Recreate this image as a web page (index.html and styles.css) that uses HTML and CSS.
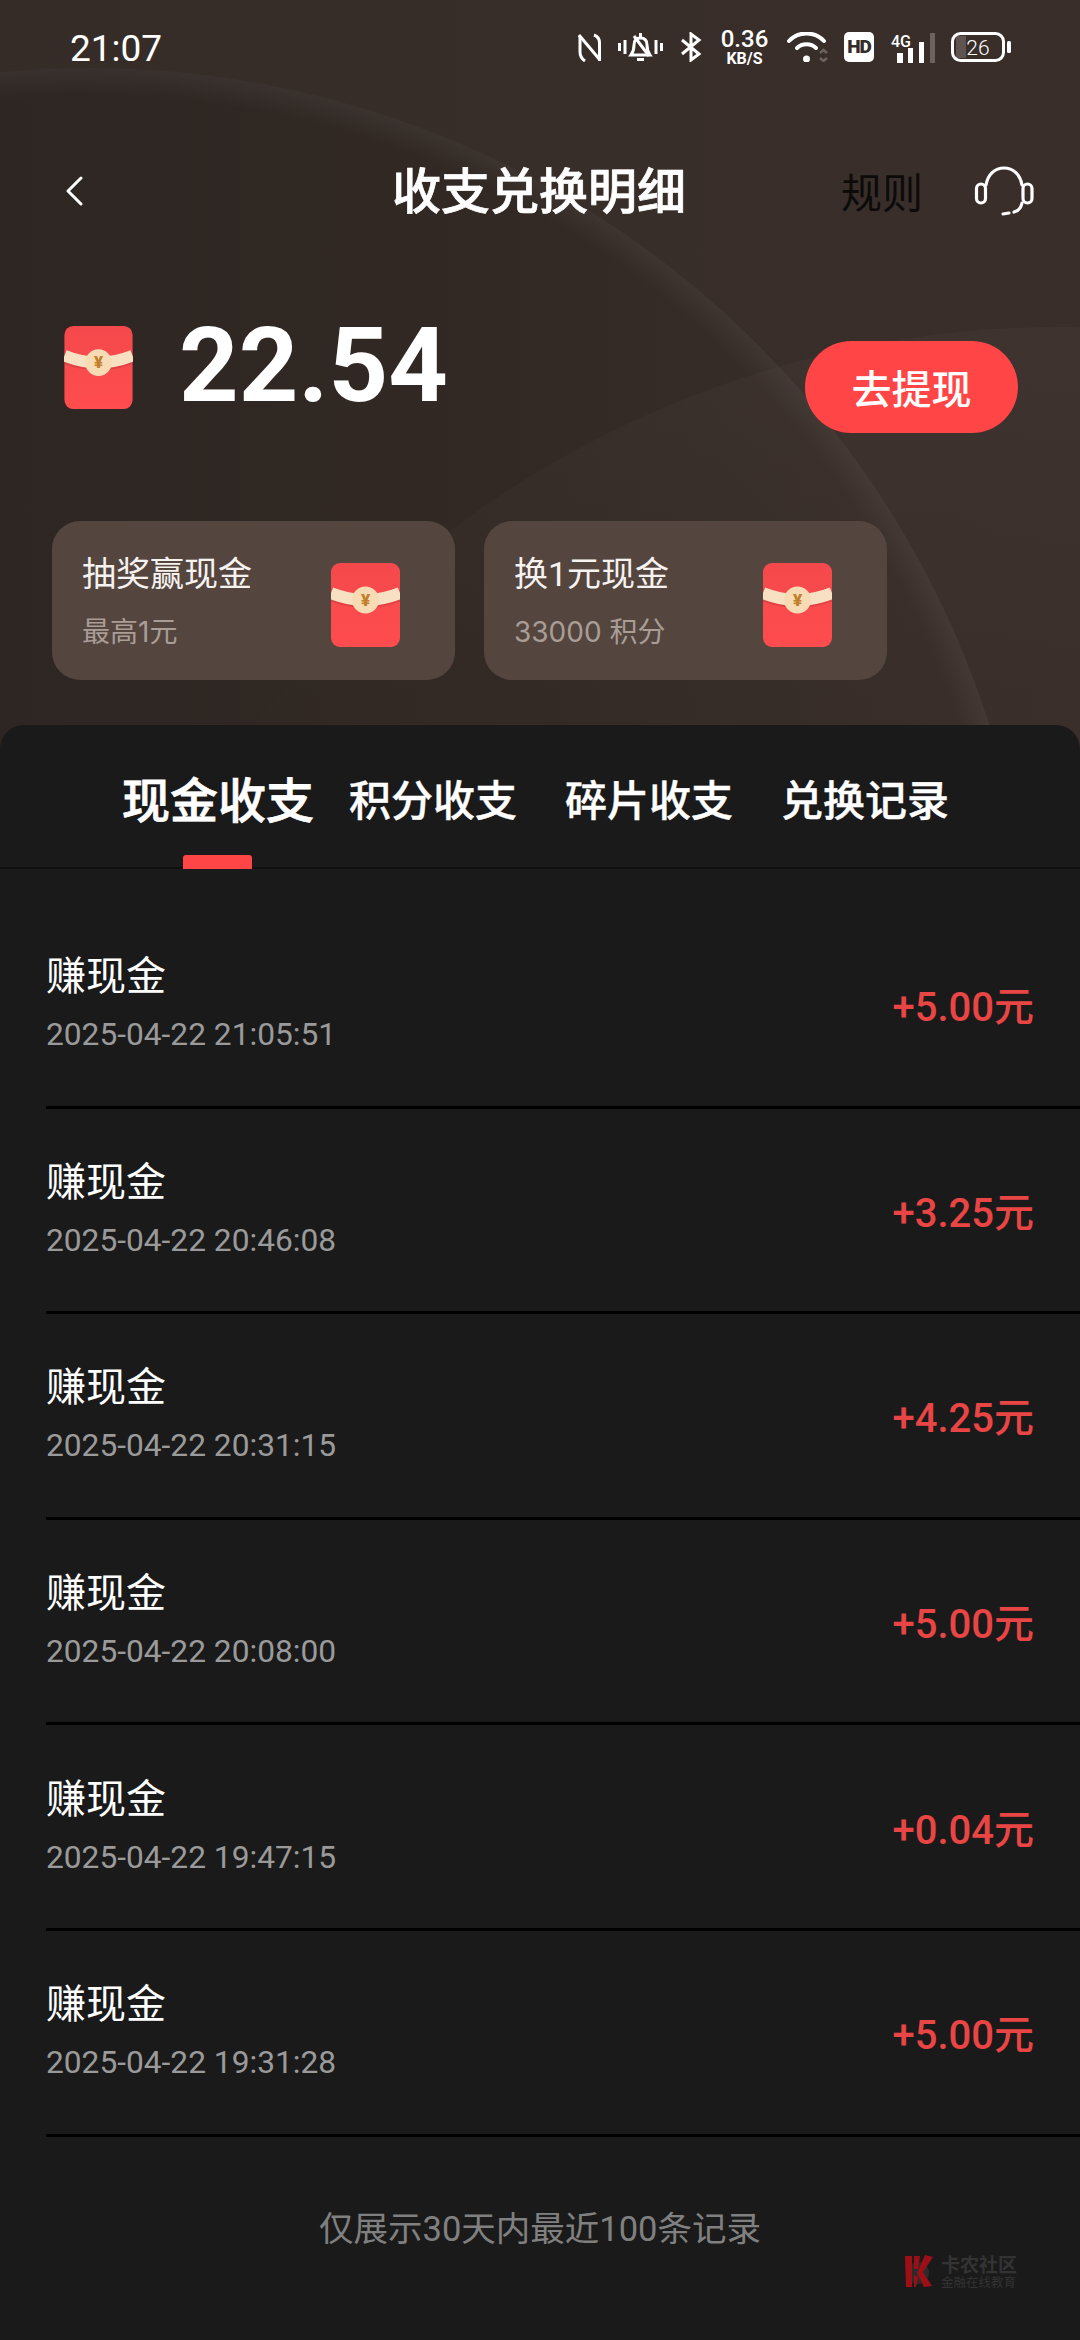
FILE: index.html
```html
<!DOCTYPE html>
<html lang="zh-CN">
<head>
  <meta charset="UTF-8" />
  <meta name="viewport" content="width=device-width, initial-scale=1.0"/>
  <title>收支兑换明细</title>
  <link rel="stylesheet" href="styles.css">
</head>
<body>

  <svg class="defs" width="0" height="0">
    <defs>
      <linearGradient id="packetFill" x1="0" y1="0" x2="0" y2="1">
        <stop offset="0" stop-color="#f4494c"/>
        <stop offset="1" stop-color="#ff4c4e"/>
      </linearGradient>
      <symbol id="packet" viewBox="0 0 69 84">
        <rect x="0" y="0" width="69" height="84" rx="9" fill="url(#packetFill)"/>
        <path d="M0 32 Q34.5 46 69 32" fill="none" stroke="#a92a2a" stroke-opacity=".3" stroke-width="12"/>
        <path d="M0 30 Q34.5 44 69 30" fill="none" stroke="#f8e0c2" stroke-width="12"/>
        <circle cx="34.5" cy="37" r="13.5" fill="#f6dbb4"/>
        <text x="34.5" y="43" text-anchor="middle" font-family="Roboto" font-weight="900" font-size="17" fill="#c27f2a">¥</text>
      </symbol>
    </defs>
  </svg>

  <div class="page">
    <div class="hero">
      <svg class="hero-bg" width="1080" height="760" viewBox="0 0 1080 760">
        <defs>
          <linearGradient id="heroFill" x1="0" y1="0" x2="1" y2="0">
            <stop offset="0" stop-color="#352c28"/>
            <stop offset="1" stop-color="#392e2a"/>
          </linearGradient>
          <linearGradient id="bigFill" gradientUnits="userSpaceOnUse" x1="0" y1="0" x2="1000" y2="0">
            <stop offset="0" stop-color="#2e2622"/>
            <stop offset=".5" stop-color="#322925"/>
            <stop offset="1" stop-color="#392e2a"/>
          </linearGradient>
          <radialGradient id="bigEdge" gradientUnits="userSpaceOnUse" cx="90" cy="1012" r="944">
            <stop offset=".97" stop-color="#fff" stop-opacity="0"/>
            <stop offset="1" stop-color="#fff" stop-opacity=".05"/>
          </radialGradient>
          <linearGradient id="smallArc" x1="0" y1="0" x2="0" y2="1">
            <stop offset="0" stop-color="#5a4e47" stop-opacity=".16"/>
            <stop offset=".18" stop-color="#5a4e47" stop-opacity=".02"/>
          </linearGradient>
        </defs>
        <rect width="1080" height="760" fill="url(#heroFill)"/>
        <circle cx="90" cy="1012" r="944" fill="url(#bigFill)"/>
        <circle cx="90" cy="1012" r="944" fill="url(#bigEdge)"/>
        <circle cx="1060" cy="1341" r="1014" fill="url(#smallArc)"/>
      </svg>

      <div class="statusbar">
        <span class="time">21:07</span>
        <div class="status-icons">
          <svg width="24" height="30" viewBox="0 0 24 30" fill="none" stroke="#fff" stroke-width="3">
            <path d="M2 4 V20 C2 24 4 27 7 29"/>
            <path d="M1 3 L22 28"/>
            <path d="M21.5 29 V11 C21.5 7 19 4 16 3"/>
          </svg>
          <svg width="45" height="32" viewBox="0 0 45 32" fill="none" stroke="#fff" stroke-width="3">
            <path d="M1.5 12 V20 M7 9 V23 M38 9 V23 M43.5 12 V20"/>
            <path d="M13 24 C16 20 16 17 16 14 C16 9 19 7 22.5 7 C26 7 29 9 29 14 C29 18 30 21 32 24 Z"/>
            <path d="M22.5 2 V6 M19 28.5 H26 M16 5 L31 25"/>
          </svg>
          <svg width="25" height="30" viewBox="0 0 25 30" fill="none" stroke="#fff" stroke-width="3">
            <path d="M3 8 L20 22 L12 28 V2 L20 8 L3 22"/>
          </svg>
          <div class="speed"><span class="speed-num">0.36</span><span class="speed-unit">KB/S</span></div>
          <svg width="43" height="30" viewBox="0 0 43 30" fill="none" stroke="#fff" stroke-width="4" stroke-linecap="round">
            <path d="M4 9 C13 -1 30 -1 39 9"/>
            <path d="M12 16 C17 11 26 11 31 16"/>
            <circle cx="21.5" cy="27" r="3.5" fill="#fff" stroke="none"/>
            <path d="M35 21 L38.5 18 L42 21 M35 26 L38.5 29 L42 26" stroke="#6d635e" stroke-width="2.5" stroke-linecap="butt"/>
          </svg>
          <span class="hd">HD</span>
          <svg width="45" height="31" viewBox="0 0 45 31">
            <text x="1" y="15" font-family="Roboto" font-size="16" font-weight="500" fill="#fff">4G</text>
            <rect x="7" y="21" width="6" height="10" fill="#fff"/>
            <rect x="18" y="16" width="5" height="15" fill="#fff"/>
            <rect x="29" y="10" width="5" height="21" fill="#fff"/>
            <rect x="40" y="1" width="5" height="30" fill="#6d635e"/>
          </svg>
          <svg width="61" height="30" viewBox="0 0 61 30">
            <rect x="5" y="4" width="10" height="22" fill="#5f544f"/>
            <rect x="1.5" y="1.5" width="51" height="27" rx="8" fill="none" stroke="#fff" stroke-width="3"/>
            <rect x="56" y="9" width="4" height="12" rx="1.5" fill="#fff"/>
            <text x="27" y="23" text-anchor="middle" font-family="Roboto" font-size="21" font-weight="300" fill="#fff">26</text>
          </svg>
        </div>
      </div>

      <div class="nav">
        <svg class="back" width="20" height="30" viewBox="0 0 20 30" fill="none" stroke="#fff" stroke-width="3" stroke-linecap="round" stroke-linejoin="round">
          <path d="M17 2 L4 15 L17 28"/>
        </svg>
        <h1 class="nav-title">收支兑换明细</h1>
        <div class="nav-right">
          <span class="rule">规则</span>
          <svg width="66" height="56" viewBox="30 20 66 56" fill="none" stroke="#fff" stroke-width="3.2" stroke-linecap="round">
            <path d="M45 42 C47 31 54 25 63 25 C72 25 79 31 81 42"/>
            <rect x="35.5" y="41" width="9" height="19" rx="4.5"/>
            <rect x="82" y="41" width="9" height="19" rx="4.5"/>
            <path d="M81 60 C80 65 77 68 73 69"/>
            <path d="M62 71 L68 70"/>
          </svg>
        </div>
      </div>

      <div class="balance">
        <svg class="packet-big" width="69" height="83"><use href="#packet"/></svg>
        <span class="amount">22.54</span>
        <button class="withdraw">去提现</button>
      </div>

      <div class="cards">
        <div class="card">
          <div class="card-text">
            <div class="card-title">抽奖赢现金</div>
            <div class="card-sub">最高1元</div>
          </div>
          <svg class="card-packet" width="69" height="84"><use href="#packet"/></svg>
        </div>
        <div class="card">
          <div class="card-text">
            <div class="card-title">换1元现金</div>
            <div class="card-sub">33000 积分</div>
          </div>
          <svg class="card-packet" width="69" height="84"><use href="#packet"/></svg>
        </div>
      </div>
    </div>

    <div class="sheet">
      <div class="tabs">
        <div class="tab tab-active">现金收支</div>
        <div class="tab">积分收支</div>
        <div class="tab">碎片收支</div>
        <div class="tab">兑换记录</div>
      </div>

      <div class="list">
        <div class="row">
          <div class="row-text"><div class="row-title">赚现金</div><div class="row-date">2025-04-22 21:05:51</div></div>
          <div class="row-money">+5.00元</div>
        </div>
        <div class="row">
          <div class="row-text"><div class="row-title">赚现金</div><div class="row-date">2025-04-22 20:46:08</div></div>
          <div class="row-money">+3.25元</div>
        </div>
        <div class="row">
          <div class="row-text"><div class="row-title">赚现金</div><div class="row-date">2025-04-22 20:31:15</div></div>
          <div class="row-money">+4.25元</div>
        </div>
        <div class="row">
          <div class="row-text"><div class="row-title">赚现金</div><div class="row-date">2025-04-22 20:08:00</div></div>
          <div class="row-money">+5.00元</div>
        </div>
        <div class="row">
          <div class="row-text"><div class="row-title">赚现金</div><div class="row-date">2025-04-22 19:47:15</div></div>
          <div class="row-money">+0.04元</div>
        </div>
        <div class="row">
          <div class="row-text"><div class="row-title">赚现金</div><div class="row-date">2025-04-22 19:31:28</div></div>
          <div class="row-money">+5.00元</div>
        </div>
      </div>

      <div class="footnote">仅展示30天内最近100条记录</div>

      <div class="watermark">
        <svg width="30" height="33" viewBox="0 0 30 33">
          <circle cx="13" cy="18" r="11" fill="#2b2b2b"/>
          <path d="M0 1 H7 V32 H1 Z M9 1 H15 L13 14 H9 Z M9 20 L13 22 L11 32 H9 Z" fill="#9d0f17"/>
          <path d="M20 0 L28 2 L18 17 L27 31 L19 32 L12 18 Z" fill="#9d0f17"/>
        </svg>
        <div class="watermark-text">
          <span class="wm-name">卡农社区</span>
          <span class="wm-sub">金融在线教育</span>
        </div>
      </div>
    </div>
  </div>

</body>
</html>
```

FILE: styles.css
```css
* {
  box-sizing: border-box;
}
html, body {
  margin: 0;
  padding: 0;
  background: #1a1a1a;
}
body {
  font-family: Roboto, "Noto Sans CJK SC", sans-serif;
  color: #fff;
}
.defs {
  position: absolute;
}
.page {
  width: 1080px;
  height: 2340px;
  overflow: hidden;
  display: flex;
  flex-direction: column;
}

/* hero */
.hero {
  position: relative;
  height: 725px;
  flex: none;
}
.hero-bg {
  position: absolute;
  top: 0;
  left: 0;
}
.statusbar, .nav, .balance, .cards {
  position: relative;
}
.statusbar {
  height: 94px;
  padding: 0 68px 0 70px;
  display: flex;
  align-items: center;
  justify-content: space-between;
}
.time {
  margin-top: 2px;
  font-size: 37px;
}
.status-icons {
  display: flex;
  align-items: center;
  gap: 16px;
}
.speed {
  display: flex;
  flex-direction: column;
  align-items: center;
  width: 49px;
  line-height: 1;
  font-weight: 500;
}
.speed-num {
  font-size: 24px;
  line-height: 23px;
}
.speed-unit {
  font-size: 16px;
  line-height: 15px;
  font-weight: 700;
}
.hd {
  width: 30px;
  height: 30px;
  border-radius: 5px;
  background: #fff;
  color: #352c28;
  font-size: 19px;
  font-weight: 900;
  line-height: 30px;
  text-align: center;
  letter-spacing: -1px;
}

.nav {
  height: 94px;
  margin-top: 50px;
  padding: 0 43px 0 64px;
  display: grid;
  grid-template-columns: 1fr auto 1fr;
  align-items: center;
}
.nav-title {
  margin: 0 0 8px -23px;
  font-size: 49px;
  font-weight: 500;
  -webkit-text-stroke: 0.7px #fff;
}
.nav-right {
  display: flex;
  align-items: center;
  justify-content: flex-end;
  gap: 48px;
}
.rule {
  margin-bottom: 3px;
  font-size: 41px;
  color: #0d0b0a;
}

.balance {
  height: 195px;
  margin-top: 88px;
  padding: 0 62px 0 64px;
  display: flex;
  align-items: flex-start;
}
.amount {
  margin-left: 46px;
  font-size: 104px;
  font-weight: 700;
  line-height: 80px;
  flex: 1;
}
.withdraw {
  width: 213px;
  height: 92px;
  margin-top: 15px;
  border: 0;
  border-radius: 46px;
  background: #ff4545;
  color: #fff;
  font-family: inherit;
  font-size: 40px;
  font-weight: 500;
}

.cards {
  padding-left: 52px;
  display: flex;
  gap: 29px;
}
.card {
  width: 403px;
  height: 159px;
  padding: 0 55px 0 30px;
  border-radius: 28px;
  background: #54463f;
  display: flex;
  align-items: center;
  justify-content: space-between;
}
.card-title {
  font-size: 34px;
  line-height: 46px;
  color: #f6f2ef;
}
.card-sub {
  margin-top: 16px;
  font-family: Inter, "Noto Sans CJK SC", sans-serif;
  font-size: 28px;
  line-height: 38px;
  color: #a99d96;
}
.card-packet {
  margin-top: 8px;
}

/* sheet */
.sheet {
  position: relative;
  flex: 1;
  border-radius: 24px 24px 0 0;
  background: #1a1a1a;
}
.tabs {
  height: 144px;
  padding: 45px 0 0 122px;
  border-bottom: 2px solid #111;
  display: flex;
  gap: 48px;
}
.tab {
  font-size: 42px;
  line-height: 64px;
  font-weight: 500;
  -webkit-text-stroke: 0.4px #fff;
  position: relative;
}
.tab-active {
  font-size: 48px;
  margin-right: -13px;
  -webkit-text-stroke: 0.8px #fff;
}
.tab-active::after {
  content: "";
  position: absolute;
  left: 61px;
  bottom: -2px;
  width: 69px;
  height: 14px;
  border-radius: 3px 3px 0 0;
  background: #ff4545;
}
.list {
  padding-top: 34px;
}
.row {
  height: 205.6px;
  margin-left: 46px;
  padding: 0 46px 0 0;
  border-bottom: 3px solid #000;
  display: flex;
  align-items: center;
  justify-content: space-between;
}
.row-title {
  font-size: 40px;
  line-height: 48px;
}
.row-date {
  margin-top: 14px;
  font-size: 31.7px;
  line-height: 40px;
  color: #9a9a9a;
}
.row-money {
  margin-top: 0;
  font-size: 40px;
  font-weight: 500;
  color: #ea4545;
}
.footnote {
  margin-top: 69px;
  font-size: 34.5px;
  line-height: 46px;
  text-align: center;
  color: #808080;
}
.watermark {
  position: absolute;
  left: 905px;
  top: 1530px;
  display: flex;
  gap: 6px;
}
.watermark-text {
  display: flex;
  flex-direction: column;
}
.wm-name {
  font-size: 19px;
  line-height: 21px;
  font-weight: 700;
  color: #333;
}
.wm-sub {
  font-size: 12.5px;
  line-height: 14px;
  color: #333;
}
```
